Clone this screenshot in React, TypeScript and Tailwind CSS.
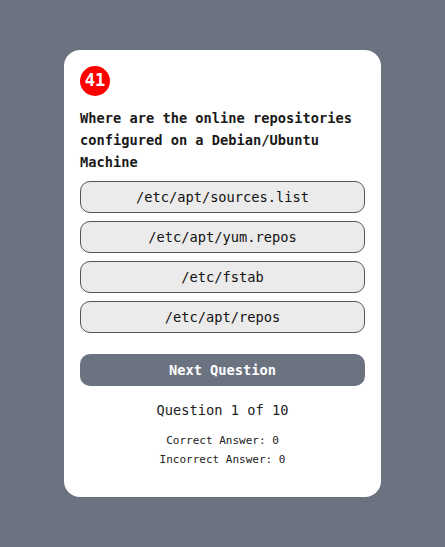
import React from 'react';

const options = ['/etc/apt/sources.list', '/etc/apt/yum.repos', '/etc/fstab', '/etc/apt/repos'];

const mono = { fontFamily: '"DejaVu Sans Mono", "Liberation Mono", monospace' };

export default function App() {
  return (
    <div className="min-h-screen w-full bg-[#6b7280] flex items-center justify-center" style={mono}>
      <div className="w-[317px] bg-white rounded-[16px] px-4 pt-4 pb-[28px] flex flex-col">
        <div className="w-[30px] h-[30px] rounded-full bg-[#ff0000] text-white flex items-center justify-center font-bold text-[17px]">
          41
        </div>
        <h2 className="mt-[11px] text-[13.7px] leading-[22px] font-bold text-[#1a1a1a]">
          Where are the online repositories configured on a Debian/Ubuntu Machine
        </h2>
        <div className="mt-2 flex flex-col gap-2">
          {options.map((o) => (
            <button
              key={o}
              className="h-[32px] w-full rounded-[10px] border border-[#555] bg-[#ebebeb] text-[13.7px] text-[#111]"
            >
              {o}
            </button>
          ))}
        </div>
        <button className="mt-[21px] h-[32px] w-full rounded-[10px] bg-[#6b7280] text-white font-bold text-[13.7px]">
          Next Question
        </button>
        <p className="mt-[13px] text-center text-[13.7px] leading-[22px] text-[#222]">Question 1 of 10</p>
        <div className="mt-[10px] text-center text-[11px] leading-[19px] text-[#222]">
          <p>Correct Answer: 0</p>
          <p>Incorrect Answer: 0</p>
        </div>
      </div>
    </div>
  );
}
